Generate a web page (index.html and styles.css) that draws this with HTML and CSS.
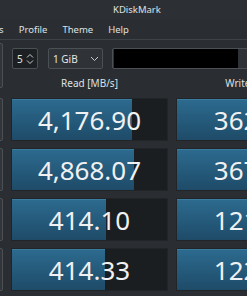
FILE: index.html
```html
<!DOCTYPE html>
<html>
<head>
<meta charset="utf-8">
<link rel="stylesheet" href="styles.css">
</head>
<body>
<div class="window">
  <div class="titlebar"><span class="title">KDiskMark</span></div>
  <div class="menubar">
    <span class="menu">Settings</span>
    <span class="menu">Profile</span>
    <span class="menu">Theme</span>
    <span class="menu">Help</span>
  </div>
  <div class="main">
    <button class="btn all"></button>
    <div class="toolbar">
      <div class="spin"><span>5</span>
        <svg class="updown" width="8" height="12" viewBox="0 0 8 12"><path d="M1 4.5 L4 1.5 L7 4.5 M1 7.5 L4 10.5 L7 7.5" fill="none" stroke="#c8cbce" stroke-width="1"/></svg>
      </div>
      <div class="combo size"><span>1 GiB</span>
        <svg class="chev" width="9" height="6" viewBox="0 0 9 6"><path d="M1 1 L4.5 4.5 L8 1" fill="none" stroke="#c8cbce" stroke-width="1"/></svg>
      </div>
      <div class="combo dir"><span class="redact"></span>
        <svg class="chev" width="9" height="6" viewBox="0 0 9 6"><path d="M1 1 L4.5 4.5 L8 1" fill="none" stroke="#c8cbce" stroke-width="1"/></svg>
      </div>
    </div>
    <div class="head">Read [MB/s]</div>
    <div class="head">Write [MB/s]</div>

    <button class="btn label"></button>
    <div class="bar"><div class="fill" style="width:120px"></div><span class="val">4,176.90</span></div>
    <div class="bar"><div class="fill" style="width:110px"></div><span class="val">362.37</span></div>

    <button class="btn label"></button>
    <div class="bar"><div class="fill" style="width:122px"></div><span class="val">4,868.07</span></div>
    <div class="bar"><div class="fill" style="width:110px"></div><span class="val">367.73</span></div>

    <button class="btn label"></button>
    <div class="bar"><div class="fill" style="width:94px"></div><span class="val">414.10</span></div>
    <div class="bar"><div class="fill" style="width:90px"></div><span class="val">121.59</span></div>

    <button class="btn label"></button>
    <div class="bar"><div class="fill" style="width:93px"></div><span class="val">414.33</span></div>
    <div class="bar"><div class="fill" style="width:90px"></div><span class="val">122.19</span></div>
  </div>
</div>
</body>
</html>
```
FILE: styles.css
```css
html, body {
  margin: 0;
  padding: 0;
}
body {
  width: 247px;
  height: 296px;
  overflow: hidden;
  background: #2a2e32;
  font-family: "Noto Sans", "DejaVu Sans", sans-serif;
  color: #e3e5e7;
}
.window {
  width: 247px;
  height: 296px;
  overflow: hidden;
}
.titlebar {
  height: 20px;
  line-height: 20px;
  font-size: 9.5px;
  padding-left: 113px;
  color: #dfe1e3;
  background: #2c3035;
}
.menubar {
  height: 19px;
  border-bottom: 1px solid #3d4247;
  display: flex;
  align-items: center;
  margin-left: -40px;
  font-size: 9.5px;
  color: #dfe1e3;
}
.menu {
  padding: 0 7.5px;
  line-height: 19px;
}
.main {
  display: grid;
  grid-template-columns: 80px 157px 157px;
  grid-template-rows: 21px 15px 43px 43px 43px 43px;
  column-gap: 8px;
  row-gap: 7px;
  margin-left: -77px;
  padding-top: 8px;
  font-size: 10px;
}
.btn {
  font-family: inherit;
  font-size: 10px;
  color: #e3e5e7;
  background: #32363b;
  border: 1px solid #4b5055;
  border-radius: 2px;
  padding: 0;
  margin: 0;
}
.all {
  grid-row: 1 / 3;
  grid-column: 1;
  margin-top: -5px;
  margin-bottom: 3px;
}
.toolbar {
  grid-column: 2 / 4;
  display: flex;
  gap: 10px;
  padding-left: 1px;
  height: 21px;
}
.spin {
  width: 26px;
  box-sizing: border-box;
  border: 1px solid #4b5055;
  border-radius: 2px;
  background: #1d2023;
  display: flex;
  align-items: center;
  justify-content: space-between;
  padding: 0 3px 0 4px;
}
.combo {
  box-sizing: border-box;
  border: 1px solid #4b5055;
  border-radius: 2px;
  background: #2f3337;
  display: flex;
  align-items: center;
  justify-content: space-between;
}
.size {
  width: 55px;
  padding: 0 3px 0 4px;
}
.dir {
  flex: 1;
  margin-left: -1px;
  padding: 0 3px 0 1px;
}
.redact {
  display: block;
  width: 124px;
  height: 19px;
  background: #000;
}
.head {
  align-self: start;
  text-align: center;
  line-height: 14px;
  color: #dfe1e3;
}
.bar {
  position: relative;
  background: #1b1e21;
  border: 1px solid #222528;
  box-sizing: border-box;
  display: flex;
  align-items: center;
  justify-content: center;
  overflow: hidden;
}
.fill {
  position: absolute;
  left: 0;
  top: 0;
  bottom: 0;
  background: linear-gradient(#2c6a8e, #1e4b68);
  border-top: 1px solid #3a7ba0;
}
.val {
  position: relative;
  font-size: 26px;
  color: #f0f1f2;
  line-height: 30px;
}
```
